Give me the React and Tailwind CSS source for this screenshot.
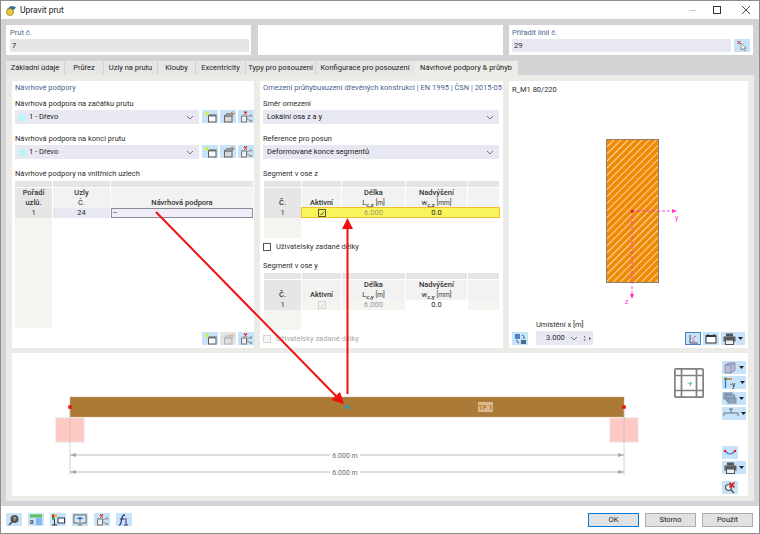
import React from "react";

const Chevron = () => (
  <svg width="8" height="5" viewBox="0 0 8 5" className="shrink-0"><path d="M1 1l3 3 3-3" fill="none" stroke="#6b6b75" strokeWidth="0.9" /></svg>
);

const Btn = ({ children, w = "w-4", className = "" }) => (
  <div className={`${w} h-[13px] bg-[#c6e3f9] flex items-center justify-center shrink-0 ${className}`}>{children}</div>
);

const Caret = () => (
  <svg width="5" height="3" viewBox="0 0 5 3" className="shrink-0"><path d="M0 0h5L2.500 3z" fill="#222" /></svg>
);

const IconNew = () => (
  <svg width="13" height="12" viewBox="0 0 13 12">
    <rect x="4.500" y="4" width="7.500" height="7" fill="#f8f8f8" stroke="#5a5a5a" />
    <rect x="4.500" y="4" width="7.500" height="1.400" fill="#6a6a6a" />
    <path d="M3 0l.8 1.700L5.600 1.400 4.400 2.900 5.300 4.500 3.400 3.900 2 5 2 3.300.4 2.300l1.900-.5z" fill="#d8ee2a" />
  </svg>
);
const IconEdit = ({ off }) => (
  <svg width="13" height="12" viewBox="0 0 13 12" opacity={off ? 0.4 : 1}>
    <rect x="2.500" y="5" width="7.500" height="6" fill="#d8d8d8" stroke="#666" />
    <path d="M2.500 5l2-2.500h7.500L10 5z" fill="#a0a0a0" stroke="#666" strokeWidth="0.6" />
    <path d="M9 2l2-1.500M11 3l1.500-1" stroke="#d2691e" strokeWidth="0.9" />
  </svg>
);
const IconDel = () => (
  <svg width="13" height="12" viewBox="0 0 13 12">
    <rect x="1.500" y="5" width="5" height="6" fill="#eee" stroke="#777" />
    <path d="M7 6l3-1.500M7 8l4 2" stroke="#777" strokeWidth="0.8" />
    <circle cx="11" cy="4.500" r="1.200" fill="#999" />
    <circle cx="11" cy="10" r="1.200" fill="#999" />
    <path d="M4 .5l3 3M7 .5l-3 3" stroke="#e02020" strokeWidth="1.100" />
  </svg>
);
const IconSet = ({ off }) => (
  <div className="flex gap-[2px]">
    <Btn><IconNew /></Btn>
    <Btn className={off ? "bg-[#e4e4e4]" : ""}><IconEdit off={off} /></Btn>
    <Btn><IconDel /></Btn>
  </div>
);

const Select = ({ children, className = "" }) => (
  <div className={`h-[14px] bg-[#e8e8f3] flex items-center pr-[5px] pl-[4px] ${className}`}>
    <div className="flex-1 flex items-center gap-[3px] text-[#222]">{children}</div>
    <Chevron />
  </div>
);

const Swatch = () => <div className="w-[7px] h-[7px] bg-[#b9f5f7]" />;

const Heading = ({ children }) => <div className="h-[13px] leading-[13px] text-[#4a5f8f] whitespace-nowrap">{children}</div>;
const Label = ({ children, className = "" }) => <div className={`h-[13px] leading-[13px] text-[#2c2c2c] whitespace-nowrap ${className}`}>{children}</div>;

const Check = ({ on, off }) => (
  <div className={`w-[8px] h-[8px] border flex items-center justify-center ${off ? "border-[#d4d4d4] bg-[#f4f4f0]" : on ? "border-[#5a5a3a]" : "border-[#555] bg-white"}`}>
    {(on || off === "tick") && <svg width="8" height="7" viewBox="0 0 8 7"><path d="M1.200 3.500l2 2 3.600-4.500" fill="none" stroke={on ? "#333" : "#c8c8c8"} strokeWidth="1" /></svg>}
  </div>
);

const segCols = "grid grid-cols-[37px_39px_63px_61px_31px] gap-x-px";

const SegmentTable = ({ axis, highlight }) => (
  <div className="mt-[1px] ml-[1px] w-[235px] relative">
    <div className={segCols}>
      {[0, 1, 2, 3, 4].map((i) => <div key={i} className="h-[6px] bg-[#e4e4e4]" />)}
    </div>
    <div className={`${segCols} h-[20px] mt-px text-center font-medium text-[#333] leading-[10px]`}>
      <div className="bg-[#e6e6e6] flex items-end justify-center pb-px">Č.</div>
      <div className="bg-[#f2f2f2] flex items-end justify-center pb-px">Aktivní</div>
      <div className="bg-[#f2f2f2] flex flex-col justify-end pb-px"><span>Délka</span><span className="font-normal">L<sub className="text-[6px] leading-none font-medium align-baseline">c,{axis}</sub> <span className="text-[6.500px]">[m]</span></span></div>
      <div className="bg-[#f2f2f2] flex flex-col justify-end pb-px"><span>Nadvýšení</span><span className="font-normal">w<sub className="text-[6px] leading-none font-medium align-baseline">c,{axis}</sub> <span className="text-[6.500px]">[mm]</span></span></div>
      <div className="bg-[#f2f2f2]" />
    </div>
    <div className={`${segCols} h-[10px] text-center leading-[10px]`}>
      <div className="bg-[#e6e6e6] text-[#333]">1</div>
      {highlight ? (
        <div className="col-span-4 grid grid-cols-[39px_63px_61px_31px] gap-x-px -ml-px -mr-px -mt-px h-[11px] bg-[#f8f55c] border border-[#f2c02a] items-center">
          <div className="flex justify-center"><Check on /></div>
          <div className="text-[#9a9a70]">6.000</div>
          <div className="text-[#222]">0.0</div>
          <div />
        </div>
      ) : (
        <>
          <div className="bg-[#f4f4f0] flex justify-center items-center"><Check off="tick" /></div>
          <div className="bg-[#f4f4f0] text-[#9a9a9a]">6.000</div>
          <div className="bg-white text-[#222]">0.0</div>
          <div className="bg-[#f4f4f0]" />
        </>
      )}
    </div>
    <div className="w-[37px] h-[20px] bg-[#f4f4f0]" />
  </div>
);

const ToolIcon = ({ kind }) => {
  if (kind === "cube") return (
    <svg width="14" height="12" viewBox="0 0 14 12"><path d="M2 3l4-2h6v7l-4 3H2z" fill="#b9bcd8" stroke="#8d8fa8" /><path d="M2 3h6v8M8 3l4-2" fill="none" stroke="#8d8fa8" /></svg>
  );
  if (kind === "axes") return (
    <svg width="15" height="12" viewBox="0 0 15 12"><path d="M2.500 2v9" stroke="#1b6fd0" strokeWidth="1.200" /><path d="M2.500 2H9" stroke="#d9431e" strokeWidth="1.200" /><circle cx="2.500" cy="2" r="1.400" fill="#2c9e3c" /><text x="7" y="10" fontSize="7" fontFamily="Roboto" fill="#222">-y</text></svg>
  );
  if (kind === "layers") return (
    <svg width="14" height="12" viewBox="0 0 14 12"><rect x="1" y="1" width="8" height="6" fill="#8fa3bd" stroke="#7a8ba3" /><rect x="3.500" y="3" width="8" height="6" fill="#9bb0c8" stroke="#7a8ba3" /><rect x="5" y="6" width="8" height="5" fill="#8fa3bd" stroke="#7a8ba3" /></svg>
  );
  if (kind === "dim") return (
    <svg width="16" height="12" viewBox="0 0 16 12"><path d="M1 9V6h14v3M8 2v4" fill="none" stroke="#666" strokeWidth="0.9" /><path d="M6 2h4" stroke="#666" /></svg>
  );
  if (kind === "print") return (
    <svg width="13" height="12" viewBox="0 0 13 12"><rect x="3" y="0.500" width="7" height="3" fill="#555" /><rect x="0.500" y="3.500" width="12" height="5" fill="#5c5c5c" /><rect x="2.500" y="7" width="8" height="4.500" fill="#eee" stroke="#555" /></svg>
  );
  if (kind === "curve") return (
    <svg width="14" height="10" viewBox="0 0 14 10"><path d="M2 3q5 6 10 0" fill="none" stroke="#4a78c8" strokeWidth="1.200" /><circle cx="2" cy="3" r="1.200" fill="#e02020" /><circle cx="12" cy="3" r="1.200" fill="#e02020" /></svg>
  );
  if (kind === "nolabel") return (
    <svg width="14" height="13" viewBox="0 0 14 13"><circle cx="5.500" cy="6.500" r="3" fill="#eee" stroke="#555" strokeWidth="1.200" /><path d="M8 9l3 3" stroke="#555" strokeWidth="1.500" /><path d="M6.500 1.500l5 5M11.500 1.500l-5 5" stroke="#e01010" strokeWidth="1.600" /></svg>
  );
  return null;
};

const CubeNav = () => (
  <svg width="30" height="30" viewBox="0 0 30 30" className="absolute left-[662px] top-[15px]">
    <g fill="none" stroke="#808080" strokeWidth="1.700">
      <rect x="0.850" y="0.850" width="28.300" height="28.300" rx="1" />
      <path d="M7.500 0.850v28.300M22.500 0.850v28.300M0.850 7.500h28.300M0.850 22.500h28.300" />
    </g>
    <text x="15.500" y="17" fontSize="5" textAnchor="middle" fill="#2aa860" fontFamily="Roboto" fontWeight="700">-y</text>
  </svg>
);

const Dimension = ({ y }) => (
  <g>
    <path d={`M58 ${y}H318M348 ${y}H612`} stroke="#bdbdbd" strokeWidth="1" />
    <path d={`M58 ${y}l6-2v4zM612 ${y}l-6-2v4z`} fill="#a8a8a8" />
    <text x="333" y={y + 2.500} fontSize="7" textAnchor="middle" fill="#6a6a6a" fontFamily="Roboto">6.000 m</text>
  </g>
);

const BeamDrawing = () => (
  <svg width="736" height="143" viewBox="0 0 736 143" className="block">
    <rect x="58" y="44" width="554" height="20" fill="#ab7a37" stroke="#c9a878" strokeWidth="0.500" />
    <rect x="44" y="65" width="28" height="24" fill="#ffc9c3" stroke="#eadcd9" />
    <rect x="598" y="65" width="28" height="24" fill="#ffc9c3" stroke="#eadcd9" />
    <path d="M58 54v68M612 54v68" stroke="#bdbdbd" strokeOpacity="0.650" strokeWidth="1" />
    <rect x="56.250" y="52.250" width="3.500" height="3.500" fill="#f01010" />
    <rect x="610.250" y="52.250" width="3.500" height="3.500" fill="#f01010" />
    <rect x="333.500" y="52.500" width="3.500" height="3.500" fill="#1a9ae0" />
    <rect x="466" y="49" width="15" height="10" fill="#d9b78f" />
    <text x="473.500" y="57" fontSize="7" textAnchor="middle" fill="#c47a2c" fontFamily="Roboto" fontWeight="700">TP 1</text>
    <Dimension y={102} />
    <Dimension y={119} />
  </svg>
);

const SectionDrawing = () => (
  <svg width="100" height="172" viewBox="0 0 100 172" className="block">
    <defs>
      <pattern id="hatch" width="5" height="5" patternUnits="userSpaceOnUse" patternTransform="rotate(45)">
        <rect width="5" height="5" fill="#f08a05" />
        <rect width="1" height="5" fill="#f8d8a8" />
      </pattern>
    </defs>
    <rect x="6.500" y="0.500" width="52" height="143" fill="url(#hatch)" stroke="#8f7f6a" />
    <path d="M32 72H72" stroke="#ff2fd0" strokeWidth="0.900" strokeDasharray="3 2" />
    <path d="M32 72V155" stroke="#ff2fd0" strokeWidth="0.900" strokeDasharray="3 2" />
    <path d="M72 70v4l5-2zM30 155h4l-2 5z" fill="#ff2fd0" />
    <rect x="31" y="71" width="2.500" height="2.500" fill="#e01030" />
    <text x="75" y="81" fontSize="7" fill="#ff2fd0" fontFamily="Roboto">y</text>
    <text x="25" y="165" fontSize="7" fill="#ff2fd0" fontFamily="Roboto">z</text>
  </svg>
);

const tabs = [
  ["Základní údaje", "w-[58px]"],
  ["Průřez", "w-[38px]"],
  ["Uzly na prutu", "w-[53px]"],
  ["Klouby", "w-[37px]"],
  ["Excentricity", "w-[49px]"],
  ["Typy pro posouzení", "w-[69px]"],
  ["Konfigurace pro posouzení", "w-[98px]"],
];

export default function App() {
  return (
    <div className="relative w-[760px] h-[534px] border border-[#8c8c8c] bg-[#d3d3d5] flex flex-col overflow-hidden text-[7.500px] font-['Roboto',sans-serif] text-[#2c2c2c]">
      <div className="h-[18px] bg-white flex items-center pl-[5px] shrink-0">
        <svg width="11" height="11" viewBox="0 0 11 11"><path d="M1 4l4-3 5 1-2 3z" fill="#2f6f8f" /><circle cx="4" cy="7" r="3.500" fill="#e8c93a" stroke="#8a7a20" strokeWidth="0.700" /></svg>
        <span className="ml-[3px] text-[8.500px] text-[#222]">Upravit prut</span>
        <div className="ml-auto flex items-center">
          <div className="w-[7px] h-px bg-[#c8c8c8] mr-[17px]" />
          <div className="w-[8px] h-[8px] border border-[#333] mr-[21px]" />
          <svg width="8" height="8" viewBox="0 0 8 8" className="mr-[9px]"><path d="M0 0l8 8M8 0L0 8" stroke="#333" strokeWidth="0.900" /></svg>
        </div>
      </div>

      <div className="flex-1 px-[5px] pt-[6px] flex flex-col">
        <div className="flex h-[30px]">
          <div className="w-[245px] bg-white pl-[4px] pr-[2px] pt-[1px]">
            <div className="h-[13px] leading-[13px] text-[#4a5f8f]">Prut č.</div>
            <div className="h-[13px] bg-[#e6e6e6] px-[2px] leading-[13px]">7</div>
          </div>
          <div className="w-[245px] ml-[7px] bg-white" />
          <div className="w-[244px] ml-[6px] bg-white pl-[3px] pr-[3px] pt-[1px]">
            <div className="h-[13px] leading-[13px] text-[#4a5f8f]">Přiřadit linii č.</div>
            <div className="flex gap-[3px]">
              <div className="flex-1 h-[13px] bg-[#e8e8f3] px-[2px] leading-[13px]">29</div>
              <Btn>
                <svg width="12" height="12" viewBox="0 0 12 12"><path d="M5 3v7l2-1.500 1.500 2.500 1-.5L8 8h2.500z" fill="#f2f2f2" stroke="#777" strokeWidth="0.700" /><path d="M1.500 1l3 3M4.500 1l-3 3" stroke="#e02020" /></svg>
              </Btn>
            </div>
          </div>
        </div>

        <div className="flex h-[14px] mt-[6px] items-stretch">
          <div className="flex gap-px">
            {tabs.map(([t, w]) => (
              <div key={t} className={`${w} bg-[#e6e6e6] text-center leading-[14px] text-[#222] whitespace-nowrap`}>{t}</div>
            ))}
          </div>
          <div className="w-[104px] bg-[#ebebe8] text-center leading-[14px] text-[#222] whitespace-nowrap">Návrhové podpory &amp; průhyb</div>
        </div>

        <div className="h-[426px] bg-[#ebebe8] pt-[6px] pl-[6px] pr-[5px] flex flex-col gap-[5px]">
          <div className="flex h-[267px] gap-[6px]">
            <div className="w-[242px] bg-white pl-[3px] flex flex-col">
              <Heading>Návrhové podpory</Heading>
              <Label className="mt-[3px]">Návrhová podpora na začátku prutu</Label>
              <div className="flex gap-[3px]">
                <Select className="w-[184px]"><Swatch /> 1 - Dřevo</Select>
                <IconSet />
              </div>
              <Label className="mt-[8px]">Návrhová podpora na konci prutu</Label>
              <div className="flex gap-[3px]">
                <Select className="w-[184px]"><Swatch /> 1 - Dřevo</Select>
                <IconSet />
              </div>
              <Label className="mt-[8px]">Návrhové podpory na vnitřních uzlech</Label>
              <div className="mt-[1px] w-[238px]">
                <div className="grid grid-cols-[37px_57px_142px] gap-x-px">
                  <div className="h-[6px] bg-[#e4e4e4]" /><div className="h-[6px] bg-[#e4e4e4]" /><div className="h-[6px] bg-[#e4e4e4]" />
                </div>
                <div className="grid grid-cols-[37px_57px_142px] gap-x-px h-[20px] mt-px text-center font-medium leading-[10px] text-[#333]">
                  <div className="bg-[#e6e6e6] flex flex-col justify-end pb-px"><span>Pořadí</span><span>uzlů.</span></div>
                  <div className="bg-[#f2f2f2] flex flex-col justify-end pb-px"><span>Uzly</span><span className="font-normal">Č.</span></div>
                  <div className="bg-[#f2f2f2] flex flex-col justify-end pb-px">Návrhová podpora</div>
                </div>
                <div className="grid grid-cols-[37px_57px_142px] gap-x-px h-[10px] leading-[10px] text-center">
                  <div className="bg-[#e6e6e6]">1</div>
                  <div className="bg-[#e8e8f3]">24</div>
                  <div className="bg-[#f0ecfa] border border-[#8b8b95] text-left pl-[1px] leading-[8px]">--</div>
                </div>
                <div className="w-[37px] h-[110px] bg-[#f4f4f0]" />
              </div>
              <div className="mt-auto mb-[3px] flex justify-end"><IconSet off /></div>
            </div>

            <div className="w-[243px] bg-white pl-[3px] pr-[4px] flex flex-col">
              <Heading>Omezení průhybuxuzení dřevěných konstrukcí | EN 1995 | ČSN | 2015-05</Heading>
              <Label className="mt-[3px]">Směr omezení</Label>
              <Select>Lokální osa z a y</Select>
              <Label className="mt-[8px]">Reference pro posun</Label>
              <Select>Deformované konce segmentů</Select>
              <Label className="mt-[8px]">Segment v ose z</Label>
              <SegmentTable axis="z" highlight />
              <div className="flex items-center gap-[5px] mt-[4px] h-[9px]"><Check /><span className="text-[#333]">Uživatelsky zadané délky</span></div>
              <Label className="mt-[8px]">Segment v ose y</Label>
              <SegmentTable axis="y" />
              <div className="flex items-center gap-[5px] mt-[4px] h-[9px]"><Check off /><span className="text-[#a8a8a8]">Uživatelsky zadané délky</span></div>
            </div>

            <div className="w-[239px] bg-white flex flex-col relative">
              <div className="pl-[3px] pt-[2px] h-[13px] leading-[13px]">R_M1 80/220</div>
              <div className="mt-[45px] ml-[91px]"><SectionDrawing /></div>
              <div className="mt-auto pb-[3px] px-[3px] flex items-end">
                <Btn>
                  <svg width="13" height="12" viewBox="0 0 13 12"><rect x="1" y="1" width="5" height="5" fill="#4a80d0" /><path d="M8 2q3 1 2 4M5 10q-3-1-2-3" fill="none" stroke="#3a5a7a" /><rect x="7" y="7" width="5" height="4" fill="#4a6a8a" /></svg>
                </Btn>
                <div className="ml-[8px]">
                  <div className="h-[13px] leading-[13px]">Umístění x [m]</div>
                  <div className="w-[57px] h-[14px] bg-[#e8e8f3] flex items-center pl-[10px] pr-[2px] gap-[5px]">
                    <span>3.000</span><Chevron />
                    <svg width="12" height="9" viewBox="0 0 12 9"><path d="M1 3l1.500-2L4 3zM1 6l1.500 2L4 6z" fill="#444" /><path d="M9 2.500l3 2-3 2z" fill="#222" /></svg>
                  </div>
                </div>
                <div className="ml-auto flex gap-[2px]">
                  <Btn className="border border-[#4a80c8]">
                    <svg width="11" height="10" viewBox="0 0 11 10"><path d="M2 1v8h8" fill="none" stroke="#555" /><path d="M4 5l4-3M4 7h3" stroke="#e040a0" strokeWidth="0.800" /></svg>
                  </Btn>
                  <Btn>
                    <svg width="12" height="11" viewBox="0 0 12 11"><rect x="1" y="3" width="10" height="7" fill="#fff" stroke="#333" /><path d="M1 3h10" stroke="#333" strokeWidth="2" /><path d="M3 3V1M9 3V1" stroke="#333" /></svg>
                  </Btn>
                  <Btn w="w-[24px]" className="gap-[2px]"><ToolIcon kind="print" /><Caret /></Btn>
                </div>
              </div>
            </div>
          </div>

          <div className="h-[143px] w-[736px] bg-white relative">
            <BeamDrawing />
            <CubeNav />
            <div className="absolute left-[710px] top-[8px] flex flex-col gap-[2.300px]">
              {["cube", "axes", "layers", "dim"].map((k) => (
                <Btn key={k} w="w-[24px]" className="gap-[2px] justify-start pl-[1px]"><ToolIcon kind={k} /><Caret /></Btn>
              ))}
            </div>
            <div className="absolute left-[710px] top-[93px] flex flex-col">
              <Btn><ToolIcon kind="curve" /></Btn>
              <Btn w="w-[24px]" className="mt-[2px] gap-[2px]"><ToolIcon kind="print" /><Caret /></Btn>
              <Btn className="mt-[7px]"><ToolIcon kind="nolabel" /></Btn>
            </div>
          </div>
        </div>
        <div className="h-[5px]" />
      </div>

      <div className="h-[27px] bg-white flex items-center pl-[5px] pr-[6px] shrink-0">
        <div className="flex gap-[6px]">
          <Btn>
            <svg width="12" height="12" viewBox="0 0 12 12"><circle cx="6.500" cy="5" r="4" fill="#555" /><path d="M4 8l-3 3" stroke="#555" strokeWidth="1.600" /><text x="6.500" y="7" fontSize="6" textAnchor="middle" fill="#fff" fontFamily="Roboto">?</text></svg>
          </Btn>
          <Btn>
            <svg width="14" height="12" viewBox="0 0 14 12"><rect x="1" y="0.500" width="12" height="3" fill="#5cc05c" /><rect x="7" y="4" width="6" height="7" fill="#8ab4f0" /><text x="1" y="10" fontSize="6" fill="#333" fontFamily="Roboto" fontWeight="700">0</text></svg>
          </Btn>
          <Btn>
            <svg width="14" height="12" viewBox="0 0 14 12"><rect x="1" y="0.500" width="2.500" height="2.500" fill="#e02020" /><rect x="3.500" y="0.500" width="2.500" height="2.500" fill="#e0c020" /><rect x="1" y="3" width="2.500" height="2.500" fill="#20a040" /><path d="M3.500 5v6M1 11h5" stroke="#333" /><rect x="7" y="4" width="6.500" height="5" fill="#fff" stroke="#335" /></svg>
          </Btn>
          <Btn>
            <svg width="14" height="12" viewBox="0 0 14 12"><rect x="1" y="1" width="12" height="8" fill="#dfe8f2" stroke="#666" /><path d="M3 5q4-4 8 0l-3 0-1 3-1-3z" fill="#3d78b8" /><path d="M5 11h4" stroke="#666" /></svg>
          </Btn>
          <Btn><IconDel /></Btn>
          <Btn>
            <svg width="14" height="12" viewBox="0 0 14 12"><path d="M2 11q2 0 2.500-5T8 1" fill="none" stroke="#353575" strokeWidth="1.300" /><path d="M3 5h5M9 4v7M7 11h4" stroke="#353575" /></svg>
          </Btn>
        </div>
        <div className="ml-auto flex gap-[6px] text-[#222]">
          <div className="w-[51px] h-[14px] bg-[#e1e1e1] border border-[#0078d7] text-center leading-[12px]">OK</div>
          <div className="w-[51px] h-[14px] bg-[#e1e1e1] border border-[#adadad] text-center leading-[12px]">Storno</div>
          <div className="w-[51px] h-[14px] bg-[#e1e1e1] border border-[#adadad] text-center leading-[12px]">Použít</div>
        </div>
      </div>

      <svg width="760" height="534" viewBox="0 0 760 534" className="absolute -left-px -top-px pointer-events-none">
        <path d="M156 212L336 396" stroke="#f01010" strokeWidth="2" />
        <path d="M344 404l-13-4 9-8z" fill="#f01010" />
        <path d="M347.500 394V226" stroke="#f01010" strokeWidth="2" />
        <path d="M347.500 218l-5.500 11h11z" fill="#f01010" />
      </svg>
    </div>
  );
}
